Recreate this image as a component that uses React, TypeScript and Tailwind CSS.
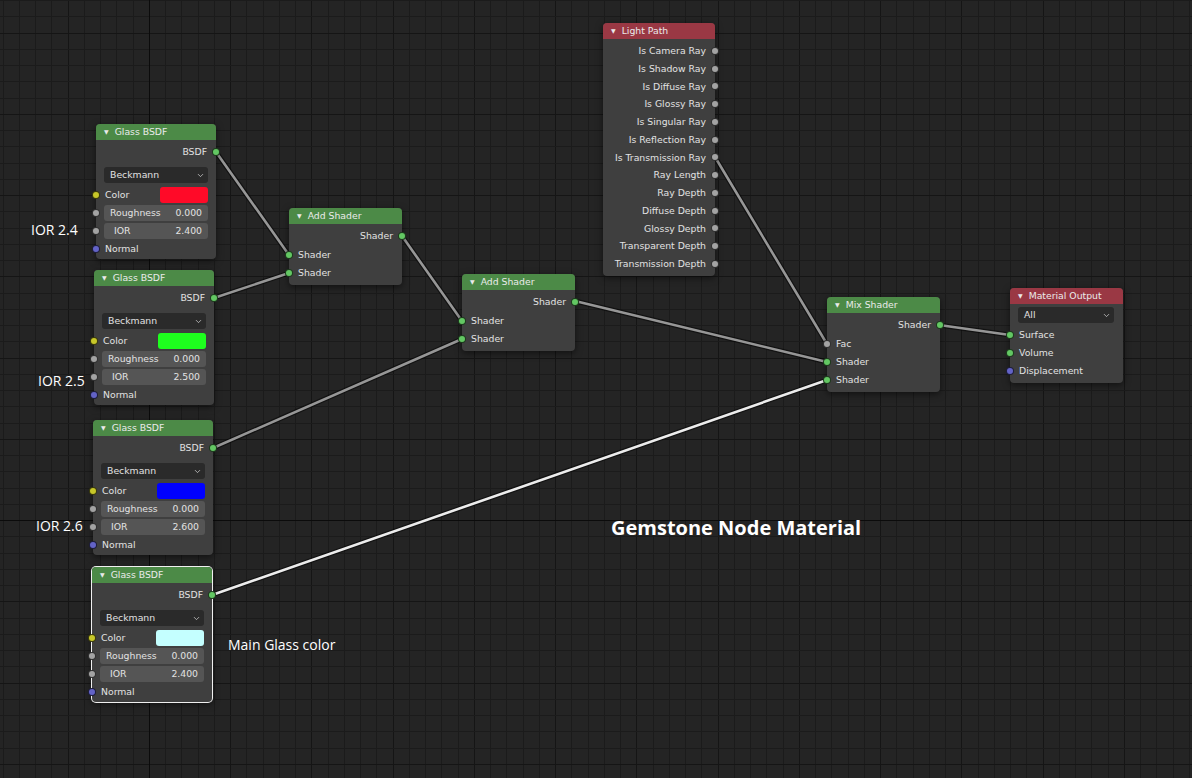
import React from 'react';
import { ChevronDown } from 'lucide-react';

type Sock = 'green' | 'gray' | 'yellow' | 'blue';

const sockColor: Record<Sock, string> = {
  green: 'bg-[#63c763]',
  gray: 'bg-[#a3a3a3]',
  yellow: 'bg-[#c7c729]',
  blue: 'bg-[#6363c7]',
};

function Socket({ kind, side }: { kind: Sock; side: 'left' | 'right' }) {
  return (
    <span
      className={`absolute top-1/2 -translate-y-1/2 w-[8px] h-[8px] rounded-full border border-black/70 ${sockColor[kind]} ${
        side === 'left' ? '-left-[4px]' : '-right-[4px]'
      }`}
    />
  );
}

function Out({ label, kind = 'green', h = 'h-[18px]' }: { label: string; kind?: Sock; h?: string }) {
  return (
    <div className={`relative ${h} flex items-center justify-end pr-[9px]`}>
      <span>{label}</span>
      <Socket kind={kind} side="right" />
    </div>
  );
}

function In({ label, kind = 'green' }: { label: string; kind?: Sock }) {
  return (
    <div className="relative h-[18px] flex items-center pl-[9px]">
      <span>{label}</span>
      <Socket kind={kind} side="left" />
    </div>
  );
}

function Dropdown({ label, className }: { label: string; className: string }) {
  return (
    <div className={`h-4 rounded-[3px] bg-[#2a2a2a] flex items-center justify-between pl-[6px] pr-[3px] ${className}`}>
      <span>{label}</span>
      <ChevronDown size={9} strokeWidth={2} className="text-[#cfcfcf]" />
    </div>
  );
}

function Field({ label, value, pad = 'pl-[6px]' }: { label: string; value: string; pad?: string }) {
  return (
    <div className="relative h-[18px] flex items-center px-2">
      <Socket kind="gray" side="left" />
      <div className={`flex-1 h-4 rounded-[3px] bg-[#555555] flex items-center justify-between pr-[6px] ${pad}`}>
        <span>{label}</span>
        <span>{value}</span>
      </div>
    </div>
  );
}

function Node({
  x,
  y,
  w,
  title,
  head,
  selected,
  children,
}: {
  x: number;
  y: number;
  w: number;
  title: string;
  head: string;
  selected?: boolean;
  children: React.ReactNode;
}) {
  return (
    <div
      className={`absolute rounded-[4px] bg-[#3f3f3f] shadow-[0_2px_7px_rgba(0,0,0,0.55)] ${
        selected ? 'ring-1 ring-[#f0f0f0]' : ''
      }`}
      style={{ left: x, top: y, width: w }}
    >
      <div className={`h-4 rounded-t-[4px] flex items-center pl-[8px] gap-[6px] text-[#eaeaea] ${head}`}>
        <span className="text-[6px] leading-none">▼</span>
        <span>{title}</span>
      </div>
      {children}
    </div>
  );
}

function GlassNode({ x, y, color, ior, selected }: { x: number; y: number; color: string; ior: string; selected?: boolean }) {
  return (
    <Node x={x} y={y} w={120} title="Glass BSDF" head="bg-[#4c8a47]" selected={selected}>
      <div className="pt-[3px] pb-px">
        <Out label="BSDF" />
        <Dropdown label="Beckmann" className="mt-[6px] mx-2" />
        <div className="relative h-[18px] mt-[3px] flex items-center pl-[9px]">
          <Socket kind="yellow" side="left" />
          <span>Color</span>
          <span className={`ml-auto mr-2 w-12 h-4 rounded-[3px] ${color}`} />
        </div>
        <Field label="Roughness" value="0.000" />
        <Field label="IOR" value={ior} pad="pl-[10px]" />
        <In label="Normal" kind="blue" />
      </div>
    </Node>
  );
}

function ShaderNode({ x, y, title }: { x: number; y: number; title: string }) {
  return (
    <Node x={x} y={y} w={113} title={title} head="bg-[#4c8a47]">
      <div className="pt-[3px] pb-[3px]">
        <Out label="Shader" />
        <div className="mt-px">
          {title === 'Mix Shader' && <In label="Fac" kind="gray" />}
          <In label="Shader" />
          <In label="Shader" />
        </div>
      </div>
    </Node>
  );
}

const lightPathOuts = [
  'Is Camera Ray',
  'Is Shadow Ray',
  'Is Diffuse Ray',
  'Is Glossy Ray',
  'Is Singular Ray',
  'Is Reflection Ray',
  'Is Transmission Ray',
  'Ray Length',
  'Ray Depth',
  'Diffuse Depth',
  'Glossy Depth',
  'Transparent Depth',
  'Transmission Depth',
];

// wires: [x1, y1, x2, y2, selected]
const wires: [number, number, number, number, boolean][] = [
  [216, 152, 289, 255, false],
  [214, 298, 289, 273, false],
  [402, 236, 462, 321, false],
  [213, 448, 462, 339, false],
  [575, 301, 827, 362, false],
  [715, 157, 827, 344, false],
  [939, 325, 1010, 335, false],
  [212, 595, 827, 380, true],
];

function Grid() {
  const xs: { p: number; i: number }[] = [];
  for (let i = -10; i <= 65; i++) xs.push({ p: Math.round(148.75 + i * 16.25) + 0.5, i });
  const ys: { p: number; i: number }[] = [];
  for (let j = -33; j <= 17; j++) ys.push({ p: Math.round(520 + j * 16.25) + 0.5, i: j });
  const col = (i: number) => (i % 5 === 0 ? '#151515' : '#1b1b1b');
  return (
    <svg className="absolute inset-0" width={1192} height={778}>
      {xs.filter((v) => v.i !== 0).map((v) => (
        <line key={`x${v.i}`} x1={v.p} y1={0} x2={v.p} y2={778} stroke={col(v.i)} strokeWidth={1} />
      ))}
      {ys.filter((v) => v.i !== 0).map((v) => (
        <line key={`y${v.i}`} x1={0} y1={v.p} x2={1192} y2={v.p} stroke={col(v.i)} strokeWidth={1} />
      ))}
      <line x1={149.5} y1={0} x2={149.5} y2={778} stroke="#0b0b0b" strokeWidth={1} />
      <line x1={0} y1={520.5} x2={1192} y2={520.5} stroke="#0b0b0b" strokeWidth={1} />
      {wires.map(([x1, y1, x2, y2, sel], k) => (
        <g key={k}>
          <line x1={x1} y1={y1} x2={x2} y2={y2} stroke="rgba(0,0,0,0.5)" strokeWidth={5} strokeLinecap="round" />
          <line x1={x1} y1={y1} x2={x2} y2={y2} stroke={sel ? '#ececec' : '#969696'} strokeWidth={2.6} strokeLinecap="round" />
        </g>
      ))}
    </svg>
  );
}

export default function App() {
  return (
    <div className="relative w-[1192px] h-[778px] overflow-hidden bg-[#242424] font-['DejaVu_Sans',sans-serif] text-[9.3px] text-[#e2e2e2] leading-none">
      <Grid />

      <GlassNode x={96} y={124} color="bg-[#ff0a28]" ior="2.400" />
      <GlassNode x={94} y={270} color="bg-[#1eff1e]" ior="2.500" />
      <GlassNode x={93} y={420} color="bg-[#0000ff]" ior="2.600" />
      <GlassNode x={92} y={567} color="bg-[#c4ffff]" ior="2.400" selected />

      <ShaderNode x={289} y={208} title="Add Shader" />
      <ShaderNode x={462} y={274} title="Add Shader" />
      <ShaderNode x={827} y={297} title="Mix Shader" />

      <Node x={603} y={23} w={112} title="Light Path" head="bg-[#9a3844]">
        <div className="pt-[3px] pb-[3px]">
          {lightPathOuts.map((l) => (
            <Out key={l} label={l} kind="gray" h="h-[17.75px]" />
          ))}
        </div>
      </Node>

      <Node x={1010} y={288} w={113} title="Material Output" head="bg-[#9a3844]">
        <div className="pt-[3px] pb-[3px]">
          <Dropdown label="All" className="ml-2 mr-[9px]" />
          <div className="mt-[3px]">
            <In label="Surface" />
            <In label="Volume" />
            <In label="Displacement" kind="blue" />
          </div>
        </div>
      </Node>

      <div className="absolute inset-0 pointer-events-none font-['Open_Sans',sans-serif] text-white">
        <span className="absolute left-[31px] top-[221px] text-[14px] leading-[18px]">IOR 2.4</span>
        <span className="absolute left-[38px] top-[372px] text-[14px] leading-[18px]">IOR 2.5</span>
        <span className="absolute left-[36px] top-[517px] text-[14px] leading-[18px]">IOR 2.6</span>
        <span className="absolute left-[228px] top-[636px] text-[14px] leading-[18px]">Main Glass color</span>
        <span className="absolute left-[611px] top-[515px] text-[20px] leading-[26px] font-bold">Gemstone Node Material</span>
      </div>
    </div>
  );
}
